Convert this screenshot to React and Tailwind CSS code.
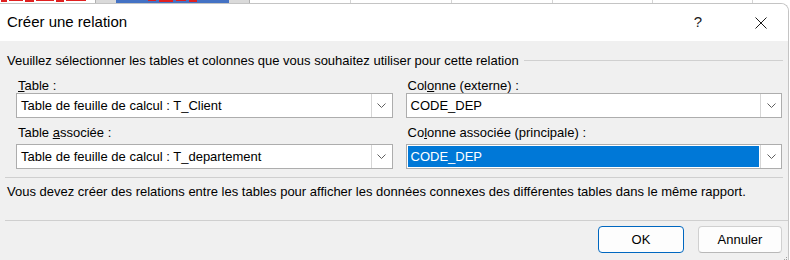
import React from "react";

const Chevron = () => (
  <svg width="9" height="5" viewBox="0 0 9 5" fill="none">
    <path d="M0.5 0.5 L4.5 4.5 L8.5 0.5" stroke="#5f5f5f" strokeWidth="1" />
  </svg>
);

const Combo = ({ value, selected }) => (
  <div className="h-[25px] flex border border-[#adadad] bg-white">
    <div className="flex-1 p-px flex">
      <div
        className={
          "flex-1 flex items-center pl-[3px] text-[13px] " +
          (selected ? "bg-[#0078d7] text-white" : "text-black")
        }
      >
        {value}
      </div>
    </div>
    <div className="w-[21px] border-l border-[#d6d6d6] bg-white flex items-center justify-center">
      <Chevron />
    </div>
  </div>
);

const Label = ({ children, first }) => (
  <div
    className={
      "text-[13px] leading-[14px] pl-[2px] text-black " +
      (first ? "h-[24px] pt-[10px]" : "h-[26px] pt-[8px]")
    }
  >
    {children}
  </div>
);

export default function App() {
  return (
    <div className="w-[790px] h-[260px] bg-white overflow-hidden flex flex-col font-['Liberation_Sans',Arial,sans-serif]">
      {/* bout de la feuille Excel derriere */}
      <div className="h-[3px] flex shrink-0">
        <div className="w-[95px] bg-white flex items-start gap-[2px] pl-[1px]">
          <span className="w-[6px] h-[2px] bg-[#e02020]" />
          <span className="w-[14px] h-[1px] bg-[#e02020]" />
          <span className="w-[9px] h-[2px] bg-[#e02020]" />
          <span className="w-[18px] h-[1px] bg-[#e02020]" />
          <span className="w-[8px] h-[2px] bg-[#e02020]" />
          <span className="w-[20px] h-[1px] bg-[#e02020]" />
        </div>
        <div className="w-[21px] bg-[#dadada] border-l border-[#b0b0b0]" />
        <div className="w-[113px] bg-[#4472c4] flex justify-center gap-[3px]">
          <span className="w-[8px] h-[1px] bg-[#e02020]" />
          <span className="w-[14px] h-[2px] bg-[#e02020]" />
          <span className="w-[10px] h-[1px] bg-[#e02020]" />
          <span className="w-[8px] h-[2px] bg-[#e02020]" />
        </div>
        <div className="w-[21px] bg-[#dadada] border-r border-[#b0b0b0]" />
        <div className="w-[101px] border-r border-[#d4d4d4]" />
        <div className="w-[101px] border-r border-[#d4d4d4]" />
        <div className="w-[101px] border-r border-[#d4d4d4]" />
        <div className="w-[100px] border-r border-[#d4d4d4]" />
        <div className="w-[100px] border-r border-[#d4d4d4]" />
        <div className="flex-1" />
      </div>

      {/* dialogue */}
      <div className="flex-1 flex flex-col mr-px border-t border-r border-[#c4c4c4] rounded-tr-[8px] overflow-hidden relative">
        <div className="h-[37px] bg-white flex items-center shrink-0">
          <span className="pl-[7px] text-[15px] text-black flex-1">Créer une relation</span>
          <span className="w-[20px] text-center text-[15px] text-[#1a1a1a] mr-[47px]">?</span>
          <svg width="12" height="12" viewBox="0 0 12 12" className="mr-[21px]">
            <path d="M0.5 0.5 L11.5 11.5 M11.5 0.5 L0.5 11.5" stroke="#1a1a1a" strokeWidth="1" />
          </svg>
        </div>

        <div className="flex-1 bg-[#f0f0f0] flex flex-col">
          <div className="h-[16px] mt-[12px] flex items-center pl-[7px] pr-[5px]">
            <span className="text-[13px] text-black whitespace-nowrap">
              Veuillez sélectionner les tables et colonnes que vous souhaitez utiliser pour cette relation
            </span>
            <div className="flex-1 ml-[5px] border-t border-[#d0d0d0] -mt-[2px]" />
          </div>

          <div className="grid grid-cols-2 gap-x-[13px] pl-[16px] pr-[6px]">
            <div className="flex flex-col">
              <Label first>
                <u>T</u>able :
              </Label>
              <Combo value="Table de feuille de calcul : T_Client" />
              <Label>
                Table <u>a</u>ssociée :
              </Label>
              <Combo value="Table de feuille de calcul : T_departement" />
            </div>
            <div className="flex flex-col">
              <Label first>
                Col<u>o</u>nne (externe) :
              </Label>
              <Combo value="CODE_DEP" />
              <Label>
                Co<u>l</u>onne associée (principale) :
              </Label>
              <Combo value="CODE_DEP" selected />
            </div>
          </div>

          <div className="mt-[8px] ml-[5px] mr-[5px] border-t border-[#cfcfcf]" />
          <div className="h-[42px] pt-[7px] pl-[7px] text-[13px] leading-[14px] text-black whitespace-nowrap">
            Vous devez créer des relations entre les tables pour afficher les données connexes des différentes tables dans le même rapport.
          </div>
          <div className="ml-[5px] border-t border-[#cfcfcf]" />
          <div className="flex justify-end gap-[14px] pt-[5px] pr-[6px]">
            <button className="w-[86px] h-[27px] rounded-[4px] border border-[#0067c0] bg-[#fdfdfd] text-[13px] text-black">
              OK
            </button>
            <button className="w-[84px] h-[27px] rounded-[4px] border border-[#d0d0d0] border-b-[#b8b8b8] bg-[#fdfdfd] text-[13px] text-black">
              Annuler
            </button>
          </div>
        </div>

        {/* poignee de redimensionnement */}
        <div className="absolute right-[1px] bottom-[0px] grid grid-cols-3 gap-[1px]">
          <span />
          <span />
          <span className="w-[1px] h-[1px] bg-[#a0a0a0]" />
          <span />
          <span className="w-[1px] h-[1px] bg-[#a0a0a0]" />
          <span className="w-[1px] h-[1px] bg-[#a0a0a0]" />
        </div>
      </div>
    </div>
  );
}
